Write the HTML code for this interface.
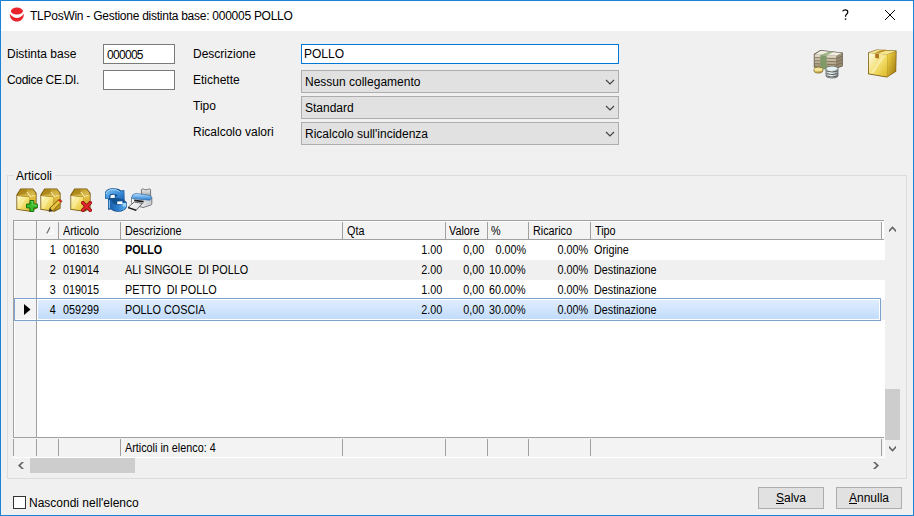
<!DOCTYPE html>
<html><head><meta charset="utf-8">
<style>
*{margin:0;padding:0;box-sizing:border-box}
html,body{width:914px;height:516px;overflow:hidden;background:#f0f0f0}
body{position:relative;font-family:"Liberation Sans",sans-serif;font-size:12px;color:#000}
.a{position:absolute;white-space:nowrap}
.t{line-height:14px}
#frame{position:absolute;left:0;top:0;width:914px;height:516px;border:1px solid #1883d7;z-index:50;pointer-events:none}
#title{position:absolute;left:0;top:0;width:914px;height:31px;background:#fff}
.inp{position:absolute;background:#fff;border:1px solid #7a7a7a}
.dd{position:absolute;background:#e1e1e1;border:1px solid #adadad}
.dd span{position:absolute;left:3px;top:4px;line-height:14px}
.chev{position:absolute;left:303px;top:8px}
.g{font-size:11px}
.g .t{font-size:12px;transform:scaleX(0.9);transform-origin:0 0}
.g .r{transform-origin:100% 0}
.btn{position:absolute;background:#e1e1e1;border:1px solid #adadad;text-align:center;line-height:20px}
</style></head><body>
<div id="title">
  <svg class="a" style="left:9px;top:7px" width="16" height="16" viewBox="0 0 16 16">
    <ellipse cx="7.9" cy="4.1" rx="6.1" ry="3.5" fill="#e8242a"/>
    <path d="M0.8 6.8 Q7.85 15.4 14.9 6.8 C14.9 12 11.7 14.6 7.85 14.6 C4 14.6 0.8 12 0.8 6.8Z" fill="#e8242a"/>
  </svg>
  <div class="a t" style="left:30px;top:9px;letter-spacing:-0.26px">TLPosWin - Gestione distinta base: 000005 POLLO</div>
  <svg class="a" style="left:841px;top:9px" width="9" height="12" viewBox="0 0 9 12"><path d="M1.6 2.4 Q2.2 0.9 4.3 0.9 Q6.8 0.9 6.8 3 Q6.8 4.3 5.6 5.2 Q4.5 6 4.5 7.8" stroke="#000" stroke-width="1.2" fill="none"/><rect x="3.8" y="9.4" width="1.4" height="1.4" fill="#000"/></svg>
  <svg class="a" style="left:884px;top:9px" width="12" height="12" viewBox="0 0 12 12"><path d="M1 1L11 11M11 1L1 11" stroke="#000" stroke-width="1"/></svg>
</div>

<div class="a t" style="left:7px;top:47px">Distinta base</div>
<div class="a t" style="left:7px;top:73px;letter-spacing:-0.3px">Codice CE.DI.</div>
<div class="inp" style="left:103px;top:44px;width:72px;height:20px"><span class="a t" style="left:3px;top:3px;letter-spacing:-0.7px">000005</span></div>
<div class="inp" style="left:103px;top:70px;width:72px;height:20px"></div>

<div class="a t" style="left:193px;top:47px">Descrizione</div>
<div class="a t" style="left:193px;top:73px">Etichette</div>
<div class="a t" style="left:193px;top:99px">Tipo</div>
<div class="a t" style="left:193px;top:125px">Ricalcolo valori</div>

<div class="inp" style="left:301px;top:44px;width:318px;height:20px;border-color:#0078d7"><span class="a t" style="left:2px;top:2px">POLLO</span></div>
<div class="dd" style="left:301px;top:70px;width:318px;height:23px"><span>Nessun collegamento</span><svg class="chev" width="10" height="6" viewBox="0 0 10 6"><path d="M1 1L5 5L9 1" stroke="#404040" fill="none" stroke-width="1.1"/></svg></div>
<div class="dd" style="left:301px;top:96px;width:318px;height:23px"><span>Standard</span><svg class="chev" width="10" height="6" viewBox="0 0 10 6"><path d="M1 1L5 5L9 1" stroke="#404040" fill="none" stroke-width="1.1"/></svg></div>
<div class="dd" style="left:301px;top:122px;width:318px;height:23px"><span>Ricalcolo sull'incidenza</span><svg class="chev" width="10" height="6" viewBox="0 0 10 6"><path d="M1 1L5 5L9 1" stroke="#404040" fill="none" stroke-width="1.1"/></svg></div>

<!-- group box -->
<div class="a" style="left:7px;top:175px;width:900px;height:304px;border:1px solid #dcdcdc"></div>
<div class="a t" style="left:14px;top:169px;padding:0 3px 0 2px;background:#f0f0f0">Articoli</div>

<!-- grid -->
<div id="grid" class="a g" style="left:13px;top:220px;width:872px;height:254px">
  <!-- body white -->
  <div class="a" style="left:0;top:0;width:872px;height:237px;background:#fff"></div>
  <!-- header -->
  <div class="a" style="left:0;top:0;width:872px;height:20px;background:#f3f3f3"></div>
  <div class="a" style="left:1px;top:1px;width:870px;height:1px;background:#fff"></div>
  <div class="a" style="left:0;top:0;width:871px;height:1px;background:#a0a0a0"></div>
  <div class="a" style="left:0;top:19px;width:871px;height:1px;background:#a0a0a0"></div>
  <div class="a" style="left:869px;top:1px;width:2px;height:18px;background:#fff"></div>
  <!-- indicator col -->
  <div class="a" style="left:0;top:20px;width:23px;height:198px;background:#f3f3f3"></div>
  <div class="a" style="left:0;top:0;width:1px;height:218px;background:#a0a0a0"></div>
  <div class="a" style="left:0;top:219px;width:1px;height:17px;background:#a0a0a0"></div>
  <div class="a" style="left:1px;top:20px;width:1px;height:198px;background:#fff"></div>
  <div class="a" style="left:23px;top:0;width:1px;height:218px;background:#a0a0a0"></div>
  <!-- header separators -->
  <div class="a" style="left:45px;top:2px;width:1px;height:17px;background:#a0a0a0"></div>
  <div class="a" style="left:107px;top:2px;width:1px;height:17px;background:#a0a0a0"></div>
  <div class="a" style="left:329px;top:2px;width:1px;height:17px;background:#a0a0a0"></div>
  <div class="a" style="left:432px;top:2px;width:1px;height:17px;background:#a0a0a0"></div>
  <div class="a" style="left:474px;top:2px;width:1px;height:17px;background:#a0a0a0"></div>
  <div class="a" style="left:515px;top:2px;width:1px;height:17px;background:#a0a0a0"></div>
  <div class="a" style="left:577px;top:2px;width:1px;height:17px;background:#a0a0a0"></div>
  <div class="a" style="left:868px;top:2px;width:1px;height:17px;background:#a0a0a0"></div>
  <!-- header labels -->
  <svg class="a" style="left:33px;top:6px" width="9" height="9" viewBox="0 0 9 9"><path d="M4 0.5 L8 7.5 L0.5 7.5" fill="none" stroke="#fff" stroke-width="1"/><path d="M0.8 7.5 L4 1.3" stroke="#6a6a6a" stroke-width="1.2"/></svg>
  <div class="a t" style="left:50px;top:4px">Articolo</div>
  <div class="a t" style="left:112px;top:4px">Descrizione</div>
  <div class="a t" style="left:334px;top:4px">Qta</div>
  <div class="a t" style="left:436px;top:4px">Valore</div>
  <div class="a t" style="left:478px;top:4px">%</div>
  <div class="a t" style="left:520px;top:4px">Ricarico</div>
  <div class="a t" style="left:582px;top:4px">Tipo</div>
  <!-- rows -->
  <div class="a" style="left:24px;top:40px;width:848px;height:20px;background:#f0f0f0"></div>
  <div class="a" style="left:868px;top:80px;width:4px;height:20px;background:#f0f0f0"></div>
  <div class="a" style="left:1px;top:78px;width:867px;height:23px;border:1px solid #7da2ce;background:#fff"></div>
  <div class="a" style="left:2px;top:80px;width:21px;height:19px;background:#f3f3f3"></div>
  <div class="a" style="left:23px;top:79px;width:1px;height:21px;background:#a0a0a0"></div>
  <div class="a" style="left:25px;top:80px;width:841px;height:19px;background:linear-gradient(#dfedfd,#c2dcfc)"></div>
  <svg class="a" style="left:11px;top:84px" width="7" height="11" viewBox="0 0 7 11"><path d="M0 0L6.5 5.5L0 11Z" fill="#000"/></svg>
  <div class="rows">
  <div class="a t r" style="right:829px;top:23px">1</div>
  <div class="a t" style="left:50px;top:23px">001630</div>
  <div class="a t" style="left:112px;top:23px;font-weight:bold">POLLO</div>
  <div class="a t r" style="right:443px;top:23px">1.00</div>
  <div class="a t r" style="right:401px;top:23px">0,00</div>
  <div class="a t r" style="right:359px;top:23px">0.00%</div>
  <div class="a t r" style="right:297px;top:23px">0.00%</div>
  <div class="a t" style="left:581px;top:23px">Origine</div>
  <div class="a t r" style="right:829px;top:43px">2</div>
  <div class="a t" style="left:50px;top:43px">019014</div>
  <div class="a t" style="left:112px;top:43px">ALI SINGOLE&nbsp; DI POLLO</div>
  <div class="a t r" style="right:443px;top:43px">2.00</div>
  <div class="a t r" style="right:401px;top:43px">0,00</div>
  <div class="a t r" style="right:359px;top:43px">10.00%</div>
  <div class="a t r" style="right:297px;top:43px">0.00%</div>
  <div class="a t" style="left:581px;top:43px">Destinazione</div>
  <div class="a t r" style="right:829px;top:63px">3</div>
  <div class="a t" style="left:50px;top:63px">019015</div>
  <div class="a t" style="left:112px;top:63px">PETTO&nbsp; DI POLLO</div>
  <div class="a t r" style="right:443px;top:63px">1.00</div>
  <div class="a t r" style="right:401px;top:63px">0,00</div>
  <div class="a t r" style="right:359px;top:63px">60.00%</div>
  <div class="a t r" style="right:297px;top:63px">0.00%</div>
  <div class="a t" style="left:581px;top:63px">Destinazione</div>
  <div class="a t r" style="right:829px;top:83px">4</div>
  <div class="a t" style="left:50px;top:83px">059299</div>
  <div class="a t" style="left:112px;top:83px">POLLO COSCIA</div>
  <div class="a t r" style="right:443px;top:83px">2.00</div>
  <div class="a t r" style="right:401px;top:83px">0,00</div>
  <div class="a t r" style="right:359px;top:83px">30.00%</div>
  <div class="a t r" style="right:297px;top:83px">0.00%</div>
  <div class="a t" style="left:581px;top:83px">Destinazione</div>
  </div>
  <!-- footer -->
  <div class="a" style="left:0;top:217px;width:871px;height:1px;background:#a0a0a0"></div>
  <div class="a" style="left:1px;top:218px;width:871px;height:19px;background:#f3f3f3"></div>
  <div class="a" style="left:23px;top:219px;width:1px;height:17px;background:#a0a0a0"></div>
  <div class="a" style="left:45px;top:219px;width:1px;height:17px;background:#a0a0a0"></div>
  <div class="a" style="left:107px;top:219px;width:1px;height:17px;background:#a0a0a0"></div>
  <div class="a" style="left:329px;top:219px;width:1px;height:17px;background:#a0a0a0"></div>
  <div class="a" style="left:432px;top:219px;width:1px;height:17px;background:#a0a0a0"></div>
  <div class="a" style="left:474px;top:219px;width:1px;height:17px;background:#a0a0a0"></div>
  <div class="a" style="left:515px;top:219px;width:1px;height:17px;background:#a0a0a0"></div>
  <div class="a" style="left:577px;top:219px;width:1px;height:17px;background:#a0a0a0"></div>
  <div class="a" style="left:868px;top:219px;width:1px;height:17px;background:#a0a0a0"></div>
  <div class="a t" style="left:112px;top:221px">Articoli in elenco: 4</div>
  <!-- vscroll -->
  <div class="a" style="left:872px;top:0;width:17px;height:237px;background:#f0f0f0"></div>
  <div class="a" style="left:872px;top:169px;width:15px;height:51px;background:#cdcdcd"></div>
  <!-- hscroll -->
  <div class="a" style="left:0;top:237px;width:889px;height:17px;background:#f0f0f0"></div>
  <div class="a" style="left:0;top:237px;width:872px;height:1px;background:#fff"></div>
  <div class="a" style="left:871px;top:219px;width:1px;height:19px;background:#fff"></div>
  <div class="a" style="left:17px;top:238px;width:105px;height:15px;background:#cdcdcd"></div>
</div>

<div class="btn" style="left:758px;top:487px;width:66px;height:22px"><u>S</u>alva</div>
<div class="btn" style="left:836px;top:487px;width:66px;height:22px"><u>A</u>nnulla</div>

<div class="a" style="left:13px;top:496px;width:13px;height:13px;border:1px solid #333;background:#fff"></div>
<div class="a t" style="left:29px;top:496px">Nascondi nell'elenco</div>


<svg width="0" height="0" style="position:absolute">
  <defs>
    <linearGradient id="bxF" x1="0" y1="0" x2="1" y2="1"><stop offset="0" stop-color="#fffbd8"/><stop offset="0.45" stop-color="#f6e47a"/><stop offset="1" stop-color="#e2bc30"/></linearGradient>
    <linearGradient id="bxR" x1="0" y1="0" x2="0" y2="1"><stop offset="0" stop-color="#f0cc4c"/><stop offset="1" stop-color="#b88c18"/></linearGradient>
    <linearGradient id="bxT" x1="0" y1="0" x2="1" y2="1"><stop offset="0" stop-color="#b08a1a"/><stop offset="1" stop-color="#e8cc5c"/></linearGradient>
    <symbol id="tbox" viewBox="0 0 21 24">
      <path d="M0.4 6.8 L4.4 0.5 L17 0.5 L20.6 5 L20.6 20.6 L14.5 23.7 L0.4 21.7 Z" fill="#76580c"/>
      <path d="M1.2 8 L13.6 9 L13.6 22.8 L1.2 20.9 Z" fill="url(#bxF)"/>
      <path d="M13.6 9 L19.8 6 L19.8 20.2 L13.6 22.8 Z" fill="url(#bxR)"/>
      <path d="M1.2 7.8 L4.9 1.3 L16.6 1.3 L19.8 5.6 L13.6 8.8 Z" fill="url(#bxT)"/>
      <path d="M1.2 7.8 L4.9 1.3 L10.6 1.3 L11.6 5.6 Z" fill="#9c7810" opacity="0.55"/>
      <path d="M10.6 4.4 L11.8 4.6 L14 8.6 M14 8.6 L18.6 7" stroke="#fff6c4" stroke-width="0.9" fill="none"/>
      <path d="M3.4 19.6 L8.6 10.4" stroke="#fffce8" stroke-width="0.9" opacity="0.6"/>
    </symbol>
  </defs>
</svg>
<!-- toolbar icons -->
<svg class="a" style="left:16px;top:188px" width="21" height="24"><use href="#tbox"/></svg>
<svg class="a" style="left:26px;top:200px" width="12" height="12" viewBox="0 0 12 12"><path d="M4 0.5h3.8v3.6h3.6v3.8h-3.6v3.6h-3.8v-3.6h-3.5v-3.8h3.5z" fill="#3cbd2c" stroke="#17730f" stroke-width="1"/><path d="M5 1.5h1.8v3.6h3.6v1" fill="none" stroke="#9be888" stroke-width="0.8" opacity="0.7"/></svg>
<svg class="a" style="left:40px;top:188px" width="21" height="24"><use href="#tbox"/></svg>
<svg class="a" style="left:48px;top:198px" width="15" height="15" viewBox="0 0 15 15"><path d="M1 13.5 L2 10 L11 1.5 Q13 1 13.8 3.5 L5 12.5 Z" fill="#e9c43a" stroke="#6b5410" stroke-width="0.9"/><path d="M11 1.5 Q13 1 13.8 3.5 L12.8 4.5 L10 2.4Z" fill="#d22"/><path d="M1 13.5 L2 10 L4.5 12.8Z" fill="#333"/></svg>
<svg class="a" style="left:70px;top:188px" width="21" height="24"><use href="#tbox"/></svg>
<svg class="a" style="left:81px;top:201px" width="11" height="11" viewBox="0 0 11 11"><path d="M1.8 1.8 L9.2 9.2 M9.2 1.8 L1.8 9.2" stroke="#8a0e12" stroke-width="3.6" stroke-linecap="square"/><path d="M1.8 1.8 L9.2 9.2 M9.2 1.8 L1.8 9.2" stroke="#e0262c" stroke-width="2.2" stroke-linecap="square"/></svg>
<!-- refresh -->
<svg class="a" style="left:102px;top:185px" width="26" height="29" viewBox="0 0 26 29">
  <defs><linearGradient id="rf" x1="0" y1="0" x2="1" y2="1"><stop offset="0" stop-color="#7cc4f4"/><stop offset="0.6" stop-color="#3a8ad6"/><stop offset="1" stop-color="#1c64b4"/></linearGradient>
  <linearGradient id="rf2" x1="0" y1="0" x2="1" y2="0"><stop offset="0" stop-color="#1a5ca8"/><stop offset="0.5" stop-color="#2c7ccc"/><stop offset="1" stop-color="#5aaeea"/></linearGradient></defs>
  <path d="M3 13.8 L3 7.6 Q4 3.3 11 3.2 Q16.5 3.2 19 5.4 L22.3 4.9 L22.7 15.6 L24.9 17.2 L24.9 22.3 Q22 26.7 17 26.7 Q11.5 26.7 9.2 24.4 L6 24.7 L6 14 Z" fill="#12508f"/>
  <path d="M3.6 13.4 L3.6 8 Q4.4 4 11 3.9 Q15.8 3.9 18.4 6.4 L21.7 5.7 L22.1 14.7 L12.8 12.3 L16 10.4 Q14 8.8 11.2 8.8 Q7.4 8.8 7.2 11.8 L7.2 13.4 Z" fill="url(#rf)"/>
  <path d="M4.2 9 Q5 4.8 11 4.6 Q15 4.6 17.6 6.6" stroke="#b4e0fc" stroke-width="0.8" fill="none"/>
  <path d="M6.6 24 L6.6 14.6 L9 14.8 Q10.4 20 16.4 20.2 Q19.6 20 20.4 17.8 L24.3 17.8 L24.3 22 Q21.6 26.1 17 26.1 Q12 26.1 9.6 23.4 Z" fill="url(#rf2)"/>
  <path d="M7.3 15.2 L7.3 23.4" stroke="#a8dcfa" stroke-width="0.9"/>
  <path d="M20.6 17.9 L24.2 17.9 L24.2 21.8 L20.8 21.2 Z" fill="#9ed2f6"/>
  <path d="M8.6 10.6 Q10 9.4 12.6 9.8 L13 12.8 L8.4 13 Z" fill="#fff"/>
  <path d="M15.2 16.6 L20.4 16.2 L20.4 19 L15.2 19.2 Z" fill="#fff"/>
</svg>
<!-- printer -->
<svg class="a" style="left:126px;top:185px" width="28" height="29" viewBox="0 0 28 29">
  <defs><linearGradient id="pb" x1="0" y1="0" x2="0" y2="1"><stop offset="0" stop-color="#c4e4fa"/><stop offset="0.5" stop-color="#6cb0ec"/><stop offset="1" stop-color="#2a78c8"/></linearGradient>
  <linearGradient id="pg" x1="0" y1="0" x2="0" y2="1"><stop offset="0" stop-color="#f0f2f2"/><stop offset="1" stop-color="#a0a4a6"/></linearGradient>
  <linearGradient id="pw" x1="0" y1="0" x2="1" y2="0"><stop offset="0" stop-color="#ffffff"/><stop offset="1" stop-color="#c8ccd0"/></linearGradient>
  <linearGradient id="pt" x1="0" y1="0" x2="1" y2="1"><stop offset="0" stop-color="#ffffff"/><stop offset="1" stop-color="#d4d8dc"/></linearGradient></defs>
  <path d="M15.4 4.6 L16.8 3.8 L18.6 4.6 L21.6 4.6 L23 3.8 L24.6 4.6 L24.6 11.2 L15.4 11.2 Z" fill="url(#pg)" stroke="#5a5a5a" stroke-width="0.8"/>
  <path d="M5.6 12.6 L5.6 18 Q6 19.2 8 19.6 L17 22.6 L25 20 Q25.8 19.6 25.8 18.6 L25.8 12.6 Z" fill="url(#pw)" stroke="#606060" stroke-width="0.8"/>
  <path d="M5.6 12.8 Q5.8 8.8 10 8.4 L23 10.2 Q25.8 10.8 25.8 12.8 L23.8 15.2 L7 13.8 Z" fill="url(#pb)" stroke="#3a6ea6" stroke-width="0.7"/>
  <path d="M8.2 14.4 L17.6 15.8 L17.6 17.6 L8.2 16.2 Z" fill="#1e1e1e"/>
  <path d="M2 22.4 L8.2 17 L16.4 18.4 L10.2 25.2 Z" fill="url(#pt)" stroke="#444" stroke-width="0.8"/>
  <path d="M2.2 22.6 L10.2 25.4" stroke="#1a1a1a" stroke-width="1.3"/>
</svg>
<!-- top right: money -->
<svg class="a" style="left:810px;top:46px" width="36" height="36" viewBox="0 0 36 36">
  <defs><linearGradient id="mf" x1="0" y1="0" x2="0" y2="1"><stop offset="0" stop-color="#e6dfcc"/><stop offset="1" stop-color="#a09070"/></linearGradient>
  <linearGradient id="ms" x1="0" y1="0" x2="1" y2="0"><stop offset="0" stop-color="#b8c0c2"/><stop offset="0.4" stop-color="#f4f8f8"/><stop offset="1" stop-color="#8a9294"/></linearGradient>
  <linearGradient id="mc" x1="0" y1="0" x2="1" y2="1"><stop offset="0" stop-color="#f4e8a0"/><stop offset="1" stop-color="#b89a30"/></linearGradient></defs>
  <path d="M3.8 8 L10.4 4 L32.8 6.4 L32.8 20.2 L26.6 22.4 L3.8 21.4 Z" fill="#5e5444"/>
  <path d="M4.6 8.6 L26.5 9.8 L26.5 21.6 L4.6 20.6 Z" fill="url(#mf)"/>
  <path d="M4.6 11.6 L26.5 12.8 M4.6 14.6 L26.5 15.8 M4.6 17.6 L26.5 18.8" stroke="#7e7058" stroke-width="0.9"/>
  <path d="M26.6 9.8 L32 7.2 L32 19.8 L26.6 21.6Z" fill="#9a8c70"/>
  <path d="M26.6 12.8 L32 10.4 M26.6 15.8 L32 13.6 M26.6 18.8 L32 16.8" stroke="#6e6250" stroke-width="0.8"/>
  <path d="M4.8 8.4 L10.6 4.8 L32 7 L26.5 9.8 Z" fill="#f2eee4"/>
  <path d="M10.4 9.1 L16.6 9.5 L16.6 23.4 L10.4 23.2Z" fill="#7f9a68"/>
  <path d="M10.4 9.1 L19.8 5.6 L23.6 6 L16.6 9.5Z" fill="#9cb486"/>
  <path d="M4 23.2 Q4 21.2 8.4 21.2 Q12.8 21.2 12.8 23.2 L12.8 24.6 Q12.8 27 8.4 27 Q4 27 4 24.6 Z" fill="url(#mc)" stroke="#7a6420" stroke-width="0.8"/>
  <ellipse cx="8.4" cy="23.2" rx="4.2" ry="1.8" fill="#f2e49a"/>
  <path d="M16 22.4 Q16 20.4 22 20.4 Q28 20.4 28 22.4 L28 30 Q28 32 22 32 Q16 32 16 30 Z" fill="url(#ms)" stroke="#5a6264" stroke-width="0.8"/>
  <path d="M16.4 25 Q22 27 27.6 25 M16.4 27.6 Q22 29.6 27.6 27.6 M16.4 30 Q22 32 27.6 30" stroke="#4e5658" stroke-width="0.9" fill="none"/>
  <ellipse cx="22" cy="22.4" rx="5.6" ry="1.8" fill="#e4f2f4"/>
</svg>
<!-- top right: box -->
<svg class="a" style="left:864px;top:46px" width="36" height="36" viewBox="0 0 36 36">
  <defs><linearGradient id="bf2" x1="0" y1="0" x2="1" y2="1"><stop offset="0" stop-color="#fffde4"/><stop offset="0.55" stop-color="#f2dc6a"/><stop offset="1" stop-color="#dcb824"/></linearGradient>
  <linearGradient id="br2" x1="0" y1="0" x2="1" y2="1"><stop offset="0" stop-color="#f6d848"/><stop offset="1" stop-color="#a07810"/></linearGradient></defs>
  <path d="M4 6.4 L12.6 3.4 L32.6 4.6 L32.2 25.4 L23 31.6 L4 28.2 Z" fill="#7a5c10"/>
  <path d="M4.8 7 L23.2 8.6 L23.2 30.8 L4.8 27.6 Z" fill="url(#bf2)"/>
  <path d="M23.2 8.6 L31.8 5.2 L31.6 25 L23.2 30.8 Z" fill="url(#br2)"/>
  <path d="M4.8 6.8 L12.8 4 L31.6 5 L23 8.4 Z" fill="#f4e490"/>
  <path d="M11.2 6.4 L20 3.8 L24 4 L15 7 Z" fill="#b88a1c"/>
  <path d="M11.2 7.6 L15 7.9 L15 12.4 L11.2 12 Z" fill="#b07818"/>
  <path d="M6.5 27 L19 9.5 L21 9.7 L9 27.5Z" fill="#fffbe0" opacity="0.45"/>
</svg>
<!-- scroll arrows -->
<svg class="a" style="left:888px;top:224px" width="10" height="10" viewBox="0 0 10 10"><path d="M1 6 L4.5 2.2 L8 6 L8 8.2 L4.5 4.6 L1 8.2Z" fill="#606060"/></svg>
<svg class="a" style="left:888px;top:444px" width="10" height="10" viewBox="0 0 10 10"><path d="M1 1.8 L4.5 5.6 L8 1.8 L8 4 L4.5 7.8 L1 4Z" fill="#606060"/></svg>
<svg class="a" style="left:16px;top:460px" width="10" height="11" viewBox="0 0 10 11"><path d="M5.8 2 L2 5.5 L5.8 9 L8 9 L4.4 5.5 L8 2Z" fill="#606060"/></svg>
<svg class="a" style="left:871px;top:460px" width="10" height="11" viewBox="0 0 10 11"><path d="M4.2 2 L8 5.5 L4.2 9 L2 9 L5.6 5.5 L2 2Z" fill="#606060"/></svg>
<div id="frame"></div>
</body></html>
